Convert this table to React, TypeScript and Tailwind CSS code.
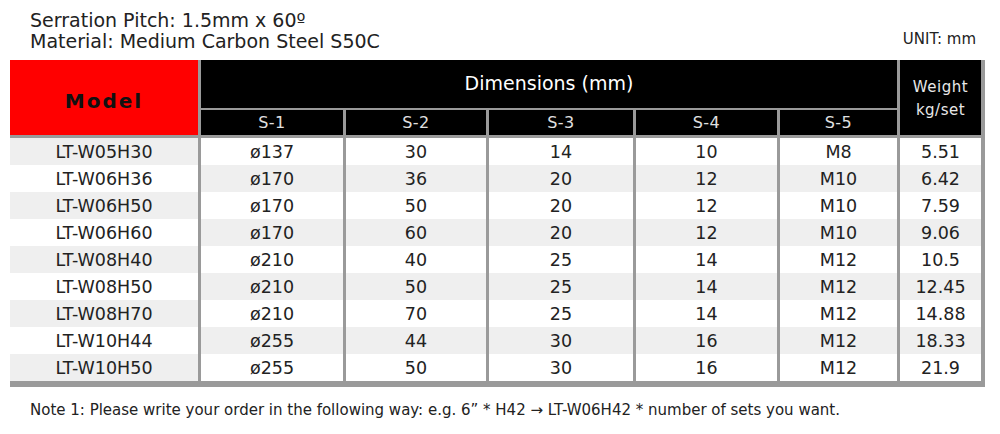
import React from "react";

const rows = [
  ["LT-W05H30", "ø137", "30", "14", "10", "M8", "5.51"],
  ["LT-W06H36", "ø170", "36", "20", "12", "M10", "6.42"],
  ["LT-W06H50", "ø170", "50", "20", "12", "M10", "7.59"],
  ["LT-W06H60", "ø170", "60", "20", "12", "M10", "9.06"],
  ["LT-W08H40", "ø210", "40", "25", "14", "M12", "10.5"],
  ["LT-W08H50", "ø210", "50", "25", "14", "M12", "12.45"],
  ["LT-W08H70", "ø210", "70", "25", "14", "M12", "14.88"],
  ["LT-W10H44", "ø255", "44", "30", "16", "M12", "18.33"],
  ["LT-W10H50", "ø255", "50", "30", "16", "M12", "21.9"],
];

const cols = "grid grid-cols-[188px_142px_140px_144px_141px_117px_81px] gap-x-[3px]";

export default function App() {
  return (
    <div
      className="w-[1000px] h-[434px] bg-white text-[#222] overflow-hidden"
      style={{ fontFamily: '"DejaVu Sans", Verdana, sans-serif' }}
    >
      <div className="flex items-end justify-between pl-[30px] pr-[24px] pt-[5px] h-[60px]">
        <div className="text-[19px] leading-[21px] text-[#222] pb-[8px]">
          <div>Serration Pitch: 1.5mm x 60º</div>
          <div>Material: Medium Carbon Steel S50C</div>
        </div>
        <div className="text-[15px] text-[#222] pb-[10px]">UNIT: mm</div>
      </div>

      <div className="ml-[10px] w-[975px] bg-[#9a9a9a] pr-[4px] pb-[6px]">
        {/* header */}
        <div className={`${cols} gap-y-[2px] grid-rows-[48px_25px]`}>
          <div className="row-span-2 bg-[#ff0000] flex items-center justify-center pt-[6px]">
            <span className="text-[20px] font-bold tracking-[2px] text-[#111]">Model</span>
          </div>
          <div className="col-span-5 bg-black text-white flex items-center justify-center text-[19px] pb-[2px]">
            Dimensions (mm)
          </div>
          <div className="row-span-2 bg-black text-[#e8e8e8] flex flex-col items-center justify-center text-[15px] leading-[23px] tracking-[0.5px] pt-[2px]">
            <span>Weight</span>
            <span>kg/set</span>
          </div>
          {["S-1", "S-2", "S-3", "S-4", "S-5"].map((s) => (
            <div
              key={s}
              className="bg-black text-[#e0e0e0] flex items-center justify-center text-[16px] tracking-[0.5px]"
            >
              {s}
            </div>
          ))}
        </div>
        {/* body */}
        <div className={`${cols} mt-[3px]`}>
          {rows.map((r, i) =>
            r.map((c, j) => {
              const gray = j === 0 ? i % 2 === 0 : i % 2 === 1;
              return (
                <div
                  key={`${i}-${j}`}
                  className={`h-[27px] flex items-center justify-center pt-[2px] text-[17.5px] text-[#222] ${
                    gray ? "bg-[#efefef]" : "bg-white"
                  }`}
                >
                  {c}
                </div>
              );
            })
          )}
        </div>
      </div>

      <div className="pl-[30px] pt-[12px] text-[15px] text-[#222]">
        Note 1: Please write your order in the following way: e.g. 6” * H42 → LT-W06H42 * number of sets you want.
      </div>
    </div>
  );
}
